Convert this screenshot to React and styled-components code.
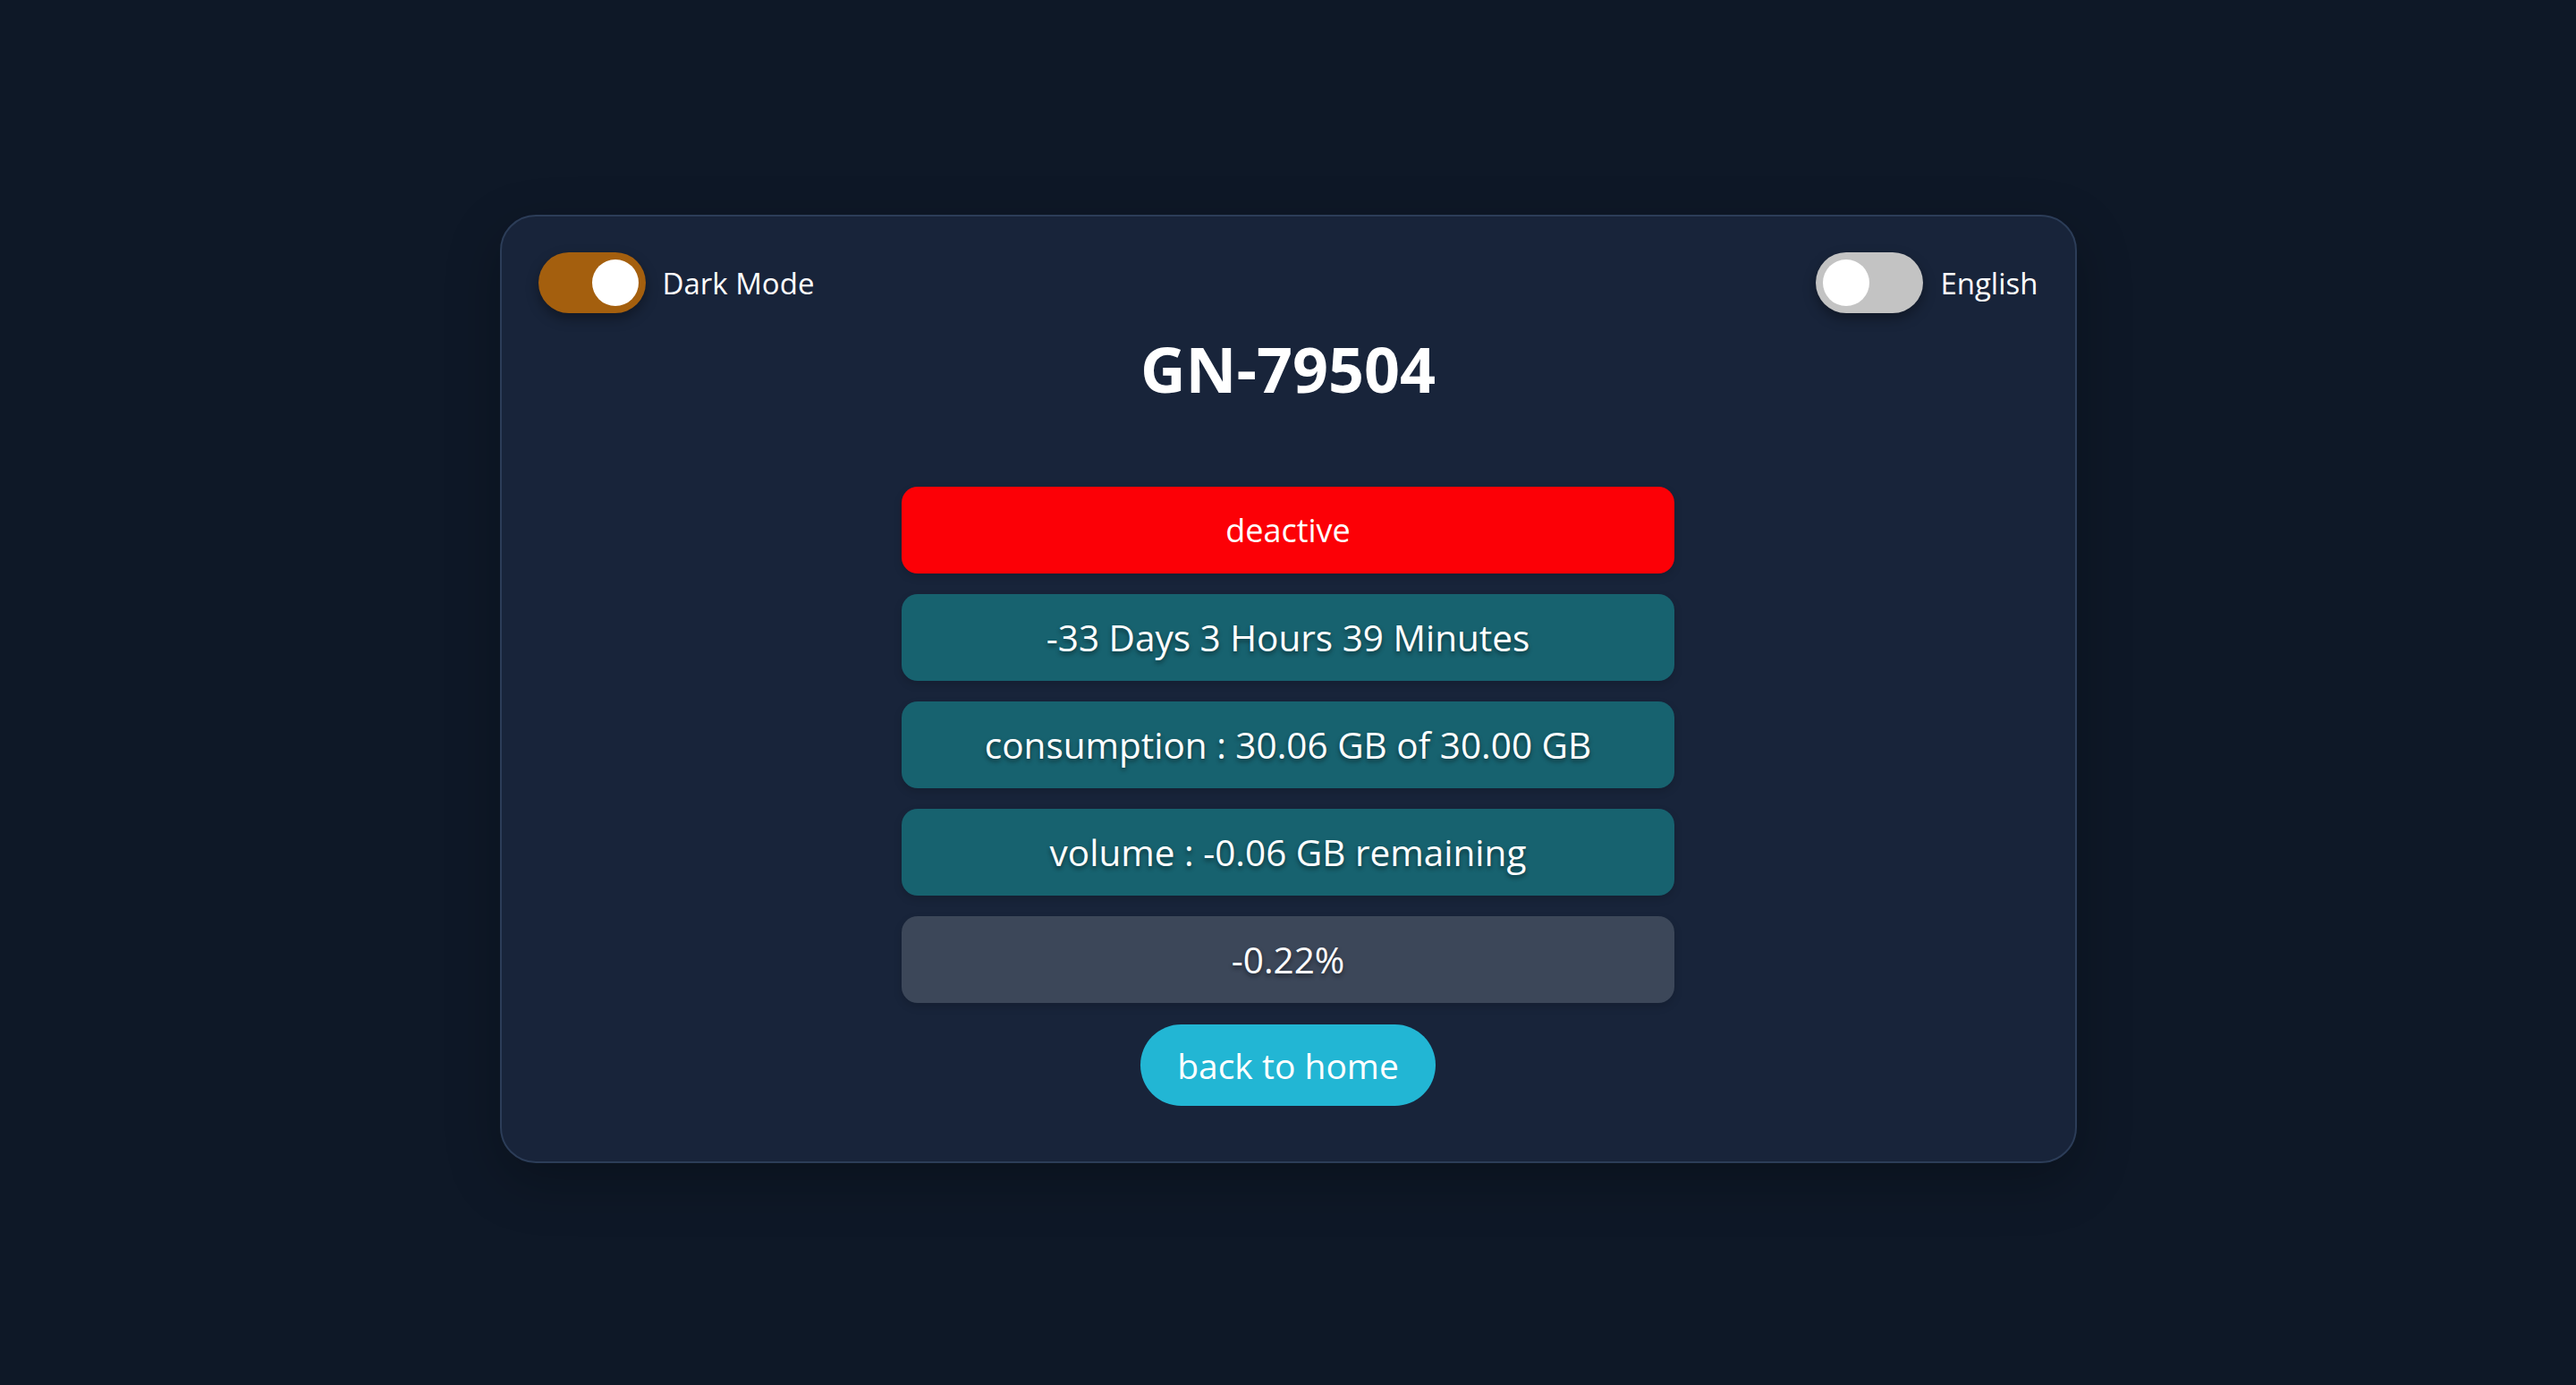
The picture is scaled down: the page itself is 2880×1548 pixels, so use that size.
import React, { useState } from 'react'
import styled, { createGlobalStyle } from 'styled-components'

const Global = createGlobalStyle`
  body {
    margin: 0;
    background: #0e1827;
    font-family: "Open Sans", "Noto Sans", sans-serif;
    color: #fff;
  }
`

const Page = styled.main`
  min-height: 100vh;
  display: flex;
  justify-content: center;
  padding-top: 240px;
  box-sizing: border-box;
`

const Card = styled.section`
  width: 1763px;
  height: 1060px;
  box-sizing: border-box;
  background: #18243a;
  border: 2px solid #2c3d58;
  border-radius: 40px;
  padding: 40px 41px 0;
  box-shadow: 0 20px 60px rgba(0, 0, 0, 0.25);
  display: flex;
  flex-direction: column;
  align-items: center;
`

const TopBar = styled.div`
  align-self: stretch;
  display: flex;
  justify-content: space-between;
  align-items: center;
`

const ToggleWrap = styled.label`
  display: flex;
  align-items: center;
  gap: 19px;
  font-size: 33px;
  font-weight: 500;
  cursor: pointer;
`

const Track = styled.span`
  width: 120px;
  height: 68px;
  border-radius: 34px;
  background: ${p => (p.$on ? p.$color : '#c3c3c3')};
  box-shadow: 0 6px 14px rgba(0, 0, 0, 0.35);
  display: flex;
  align-items: center;
  justify-content: ${p => (p.$on ? 'flex-end' : 'flex-start')};
  padding: 0 8px;
  box-sizing: border-box;
`

const Knob = styled.span`
  width: 52px;
  height: 52px;
  border-radius: 50%;
  background: #fff;
`

const Title = styled.h1`
  margin: 27px 0 0;
  font-size: 70px;
  line-height: 1;
  font-weight: 700;
`

const Rows = styled.div`
  margin-top: 97px;
  width: 864px;
  display: flex;
  flex-direction: column;
  gap: 23px;
`

const tones = {
  danger: '#fc0006',
  info: '#17626f',
  muted: '#3c4759',
}

const Row = styled.div`
  height: 97px;
  border-radius: 18px;
  background: ${p => tones[p.$tone]};
  display: flex;
  align-items: center;
  justify-content: center;
  font-size: ${p => (p.$small ? '36px' : '40.5px')};
  font-weight: 500;
  text-shadow: ${p => (p.$small ? 'none' : '0 3px 5px rgba(0, 0, 0, 0.45)')};
  box-shadow: 0 4px 10px rgba(0, 0, 0, 0.15);
  white-space: nowrap;
`

const HomeButton = styled.button`
  margin-top: 24px;
  width: 330px;
  height: 91px;
  border: none;
  border-radius: 46px;
  background: #22b6d4;
  color: #fff;
  font-family: inherit;
  font-size: 39px;
  font-weight: 500;
  cursor: pointer;
`

const Toggle = ({ label, color, defaultOn }) => {
  const [on, setOn] = useState(defaultOn)
  return (
    <ToggleWrap onClick={() => setOn(!on)}>
      <Track $on={on} $color={color}>
        <Knob />
      </Track>
      <span>{label}</span>
    </ToggleWrap>
  )
}

export default function App() {
  return (
    <>
      <Global />
      <Page>
        <Card>
          <TopBar>
            <Toggle label="Dark Mode" color="#a45f0e" defaultOn />
            <Toggle label="English" color="#22b6d4" defaultOn={false} />
          </TopBar>
          <Title>GN-79504</Title>
          <Rows>
            <Row $tone="danger" $small>deactive</Row>
            <Row $tone="info">-33 Days 3 Hours 39 Minutes</Row>
            <Row $tone="info">consumption : 30.06 GB of 30.00 GB</Row>
            <Row $tone="info">volume : -0.06 GB remaining</Row>
            <Row $tone="muted">-0.22%</Row>
          </Rows>
          <HomeButton>back to home</HomeButton>
        </Card>
      </Page>
    </>
  )
}
